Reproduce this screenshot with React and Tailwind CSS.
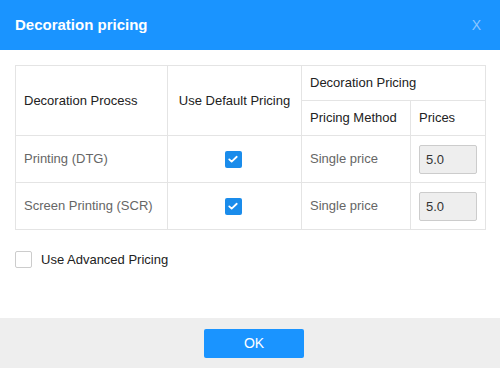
import React, { useState } from 'react';

const rows = [
  { name: 'Printing (DTG)', method: 'Single price', price: '5.0' },
  { name: 'Screen Printing (SCR)', method: 'Single price', price: '5.0' },
];

const CheckIcon = () => (
  <svg viewBox="0 0 16 16" className="w-[12px] h-[12px]" fill="none" stroke="white" strokeWidth="2.4" strokeLinecap="round" strokeLinejoin="round">
    <path d="M3 8.5l3.2 3L13 5" />
  </svg>
);

const App = () => {
  const [advanced, setAdvanced] = useState(false);

  return (
    <div className="w-[500px] h-[368px] bg-white flex flex-col text-[13px]" style={{ fontFamily: '"Liberation Sans", Arial, sans-serif' }}>
      {/* Header */}
      <div className="h-[50px] bg-[#1a94ff] flex items-center justify-between px-[15px] shrink-0">
        <h1 className="text-white font-bold text-[15px]">Decoration pricing</h1>
        <button className="text-[#8cc6ff] text-[14px] mr-[4px]">X</button>
      </div>

      {/* Body */}
      <div className="flex-1 px-[15px] pt-[15px]">
        <table className="w-[471px] border-collapse text-[#222]">
          <thead>
            <tr className="h-[35px]">
              <th rowSpan={2} className="w-[152px] border border-[#e4e4e4] font-normal text-left px-[8px]">Decoration Process</th>
              <th rowSpan={2} className="w-[134px] border border-[#e4e4e4] font-normal text-center">Use Default Pricing</th>
              <th colSpan={2} className="border border-[#e4e4e4] font-normal text-left px-[8px]">Decoration Pricing</th>
            </tr>
            <tr className="h-[35px]">
              <th className="w-[109px] border border-[#e4e4e4] font-normal text-left px-[8px]">Pricing Method</th>
              <th className="border border-[#e4e4e4] font-normal text-left px-[8px]">Prices</th>
            </tr>
          </thead>
          <tbody>
            {rows.map((row) => (
              <tr key={row.name} className="h-[47px]">
                <td className="border border-[#e4e4e4] px-[8px] text-[#666]">{row.name}</td>
                <td className="border border-[#e4e4e4]">
                  <div className="flex justify-center pr-[3px]">
                    <span className="w-[17px] h-[17px] rounded-[2px] bg-[#1a8ceb] flex items-center justify-center">
                      <CheckIcon />
                    </span>
                  </div>
                </td>
                <td className="border border-[#e4e4e4] px-[8px] text-[#666]">{row.method}</td>
                <td className="border border-[#e4e4e4] px-[8px]">
                  <input
                    readOnly
                    value={row.price}
                    className="w-[58px] h-[29px] bg-[#eeeeee] border border-[#cccccc] rounded-[2px] px-[6px] text-[#333] outline-none"
                  />
                </td>
              </tr>
            ))}
          </tbody>
        </table>

        <label className="flex items-center gap-[9px] mt-[20px] cursor-pointer" onClick={() => setAdvanced(!advanced)}>
          <span className={`w-[17px] h-[17px] rounded-[2px] border flex items-center justify-center ${advanced ? 'bg-[#1a8ceb] border-[#1a8ceb]' : 'bg-white border-[#cccccc]'}`}>
            {advanced && <CheckIcon />}
          </span>
          <span className="text-[#222]">Use Advanced Pricing</span>
        </label>
      </div>

      {/* Footer */}
      <div className="h-[50px] bg-[#eeeeee] flex items-center justify-center shrink-0">
        <button className="w-[100px] h-[29px] ml-[8px] bg-[#1a94ff] text-white text-[14px] rounded-[2px]">OK</button>
      </div>
    </div>
  );
};

export default App;
